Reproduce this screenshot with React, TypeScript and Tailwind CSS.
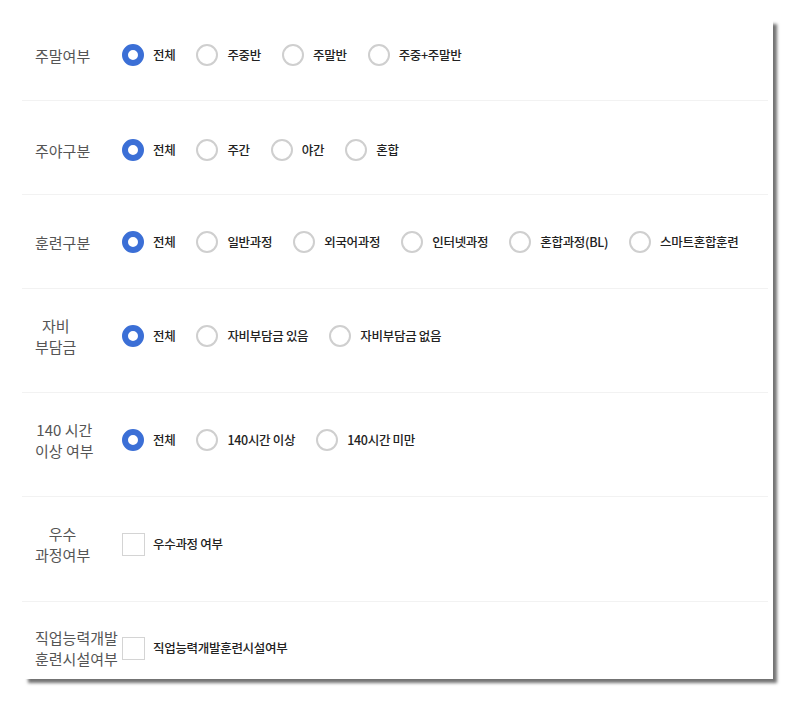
import React from "react";

type Opt = { label: string; checked?: boolean };

function Radio({ label, checked }: Opt) {
  return (
    <div className="flex items-center gap-[9px]">
      {checked ? (
        <span className="block w-[22px] h-[22px] rounded-full border-[6px] border-[#3b6fd6] bg-white shrink-0" />
      ) : (
        <span className="block w-[22px] h-[22px] rounded-full border-2 border-[#cfcfcf] bg-white shrink-0" />
      )}
      <span className="text-[12.5px] tracking-[-0.3px] font-medium text-[#222] whitespace-nowrap leading-none">
        {label}
      </span>
    </div>
  );
}

function Check({ label }: { label: string }) {
  return (
    <div className="flex items-center gap-[8px]">
      <span className="block w-[23px] h-[23px] border border-[#d4d4d4] bg-white shrink-0" />
      <span className="text-[12.5px] tracking-[-0.3px] font-medium text-[#222] whitespace-nowrap leading-none">
        {label}
      </span>
    </div>
  );
}

function Row({
  lines,
  children,
  h,
  inner,
  last,
}: {
  lines: string[];
  children: React.ReactNode;
  h: string;
  inner: string;
  last?: boolean;
}) {
  return (
    <div className={`${h} ${last ? "" : "border-b border-[#f2f2f2]"}`}>
      <div className={`flex items-center ${inner}`}>
        <div className="w-[100px] shrink-0 pl-[13px]">
          <div className="inline-block text-center text-[15px] leading-[21px] text-[#555] whitespace-nowrap">
            {lines.map((l, i) => (
              <div key={i}>{l}</div>
            ))}
          </div>
        </div>
        <div className="flex items-center gap-[21px]">{children}</div>
      </div>
    </div>
  );
}

export default function App() {
  return (
    <div
      className="w-[796px] h-[702px] bg-white pt-[18px] pl-[22px]"
      style={{ fontFamily: '"Noto Sans CJK KR", "Noto Sans", sans-serif' }}
    >
      <div className="w-[751px] h-[661px] bg-white shadow-[5px_5px_3px_-1px_rgba(0,0,0,0.55)]">
        <div className="mr-[5px]">
          <Row lines={["주말여부"]} h="h-[83px]" inner="h-[74px]">
            <Radio label="전체" checked />
            <Radio label="주중반" />
            <Radio label="주말반" />
            <Radio label="주중+주말반" />
          </Row>
          <Row lines={["주야구분"]} h="h-[94px]" inner="h-[98px]">
            <Radio label="전체" checked />
            <Radio label="주간" />
            <Radio label="야간" />
            <Radio label="혼합" />
          </Row>
          <Row lines={["훈련구분"]} h="h-[94px]" inner="h-[94px]">
            <Radio label="전체" checked />
            <Radio label="일반과정" />
            <Radio label="외국어과정" />
            <Radio label="인터넷과정" />
            <Radio label="혼합과정(BL)" />
            <Radio label="스마트혼합훈련" />
          </Row>
          <Row lines={["자비", "부담금"]} h="h-[104px]" inner="h-[94px]">
            <Radio label="전체" checked />
            <Radio label="자비부담금 있음" />
            <Radio label="자비부담금 없음" />
          </Row>
          <Row lines={["140 시간", "이상 여부"]} h="h-[104px]" inner="h-[94px]">
            <Radio label="전체" checked />
            <Radio label="140시간 이상" />
            <Radio label="140시간 미만" />
          </Row>
          <Row lines={["우수", "과정여부"]} h="h-[105px]" inner="h-[94px]">
            <Check label="우수과정 여부" />
          </Row>
          <Row lines={["직업능력개발", "훈련시설여부"]} h="h-[77px]" inner="h-[93px]" last>
            <Check label="직업능력개발훈련시설여부" />
          </Row>
        </div>
      </div>
    </div>
  );
}
